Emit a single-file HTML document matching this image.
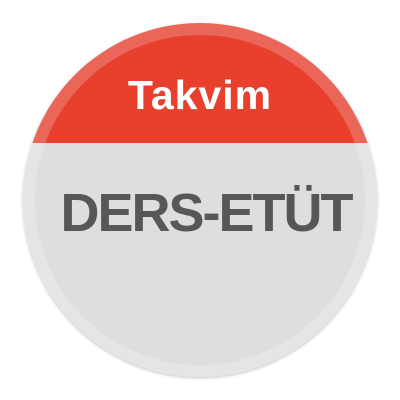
<!DOCTYPE html><html><head><style>
body{margin:0;width:400px;height:400px;background:#fff;overflow:hidden;font-family:"Liberation Sans",sans-serif}
.c{position:absolute;left:23px;top:23px;width:354px;height:354px;border-radius:50%;overflow:hidden;box-shadow:0 1px 3px rgba(0,0,0,.25)}
.top{position:absolute;left:0;top:0;width:100%;height:120px;background:#ea6659}
.bot{position:absolute;left:0;top:120px;width:100%;height:234px;background:#e5e5e5}
.in{position:absolute;left:12px;top:12px;width:330px;height:330px;border-radius:50%;overflow:hidden}
.in .top{height:108px;background:#e8402d}
.in .bot{top:108px;height:222px;background:#dedede}
.t{position:absolute;left:0;width:400px;text-align:center;font-weight:bold}
</style></head><body>
<div class="c"><div class="top"></div><div class="bot"></div>
<div class="in"><div class="top"></div><div class="bot"></div></div></div>
<div class="t" style="top:72px;font-size:41px;color:#fff;letter-spacing:1px">Takvim</div>
<div class="t" style="top:182px;font-size:54px;color:#575757;letter-spacing:-2px;left:6px">DERS-ETÜT</div>
</body></html>
